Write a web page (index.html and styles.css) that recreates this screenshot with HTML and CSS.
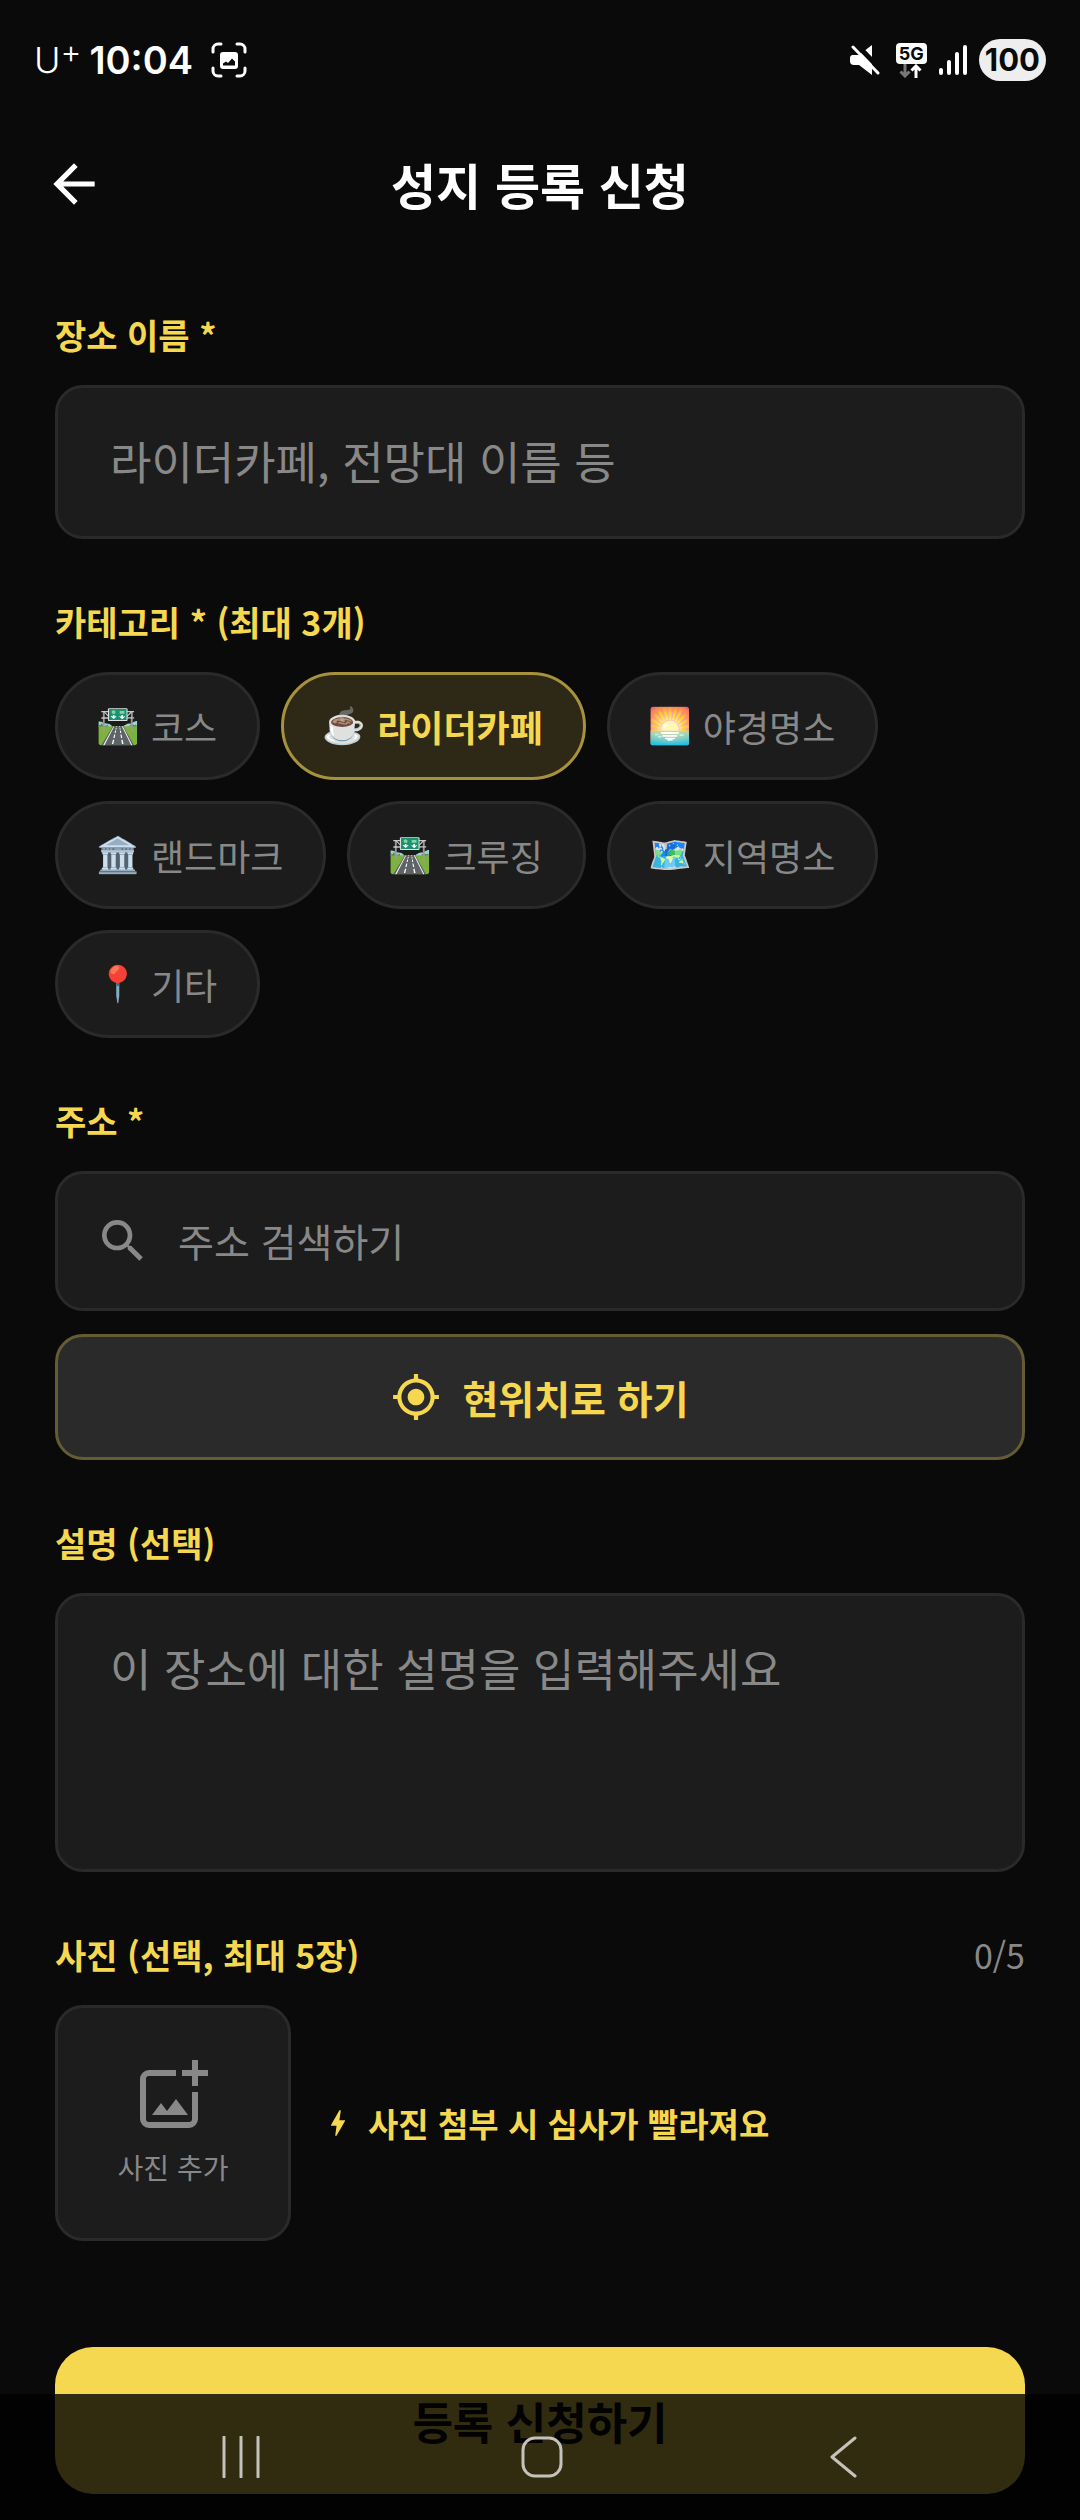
FILE: index.html
```html
<!DOCTYPE html>
<html lang="ko">
<head>
  <meta charset="UTF-8" />
  <meta name="viewport" content="width=device-width, initial-scale=1.0" />
  <title>성지 등록 신청</title>
  <link rel="stylesheet" href="styles.css">
</head>

<body>
  <div class="status-bar">
    <div class="status-left">
      <span class="carrier">U<sup>+</sup></span>
      <span class="clock">10:04</span>
      <svg class="capture-icon" width="36" height="36" viewBox="0 0 36 36">
        <path d="M2 10V7a5 5 0 0 1 5-5h3M26 2h3a5 5 0 0 1 5 5v3M34 26v3a5 5 0 0 1-5 5h-3M10 34H7a5 5 0 0 1-5-5v-3" fill="none" stroke="#fff" stroke-width="3" stroke-linecap="round"/>
        <rect x="9" y="10" width="18" height="17" rx="3" fill="#fff"/>
        <path d="M12 23.500v-2l3-2 2 1.500 4-4.500 3 3v4z" fill="#0a0a0a"/>
      </svg>
    </div>
    <div class="status-right">
      <svg width="30" height="32" viewBox="0 0 30 32">
        <path d="M2 11h7L22 1v30L9 21H4a4 4 0 0 1-4-4v-3a3 3 0 0 1 2-3z" fill="#fff"/>
        <path d="M6 0l26 27" stroke="#0a0a0a" stroke-width="5"/>
        <path d="M3 3l25 26" stroke="#fff" stroke-width="3" stroke-linecap="round"/>
      </svg>
      <div class="network">
        <span class="network-type">5G</span>
        <svg width="24" height="14" viewBox="0 0 24 14">
          <path d="M6 0v12M1.500 7.500L6 12l4.500-4.500" fill="none" stroke="#777" stroke-width="3"/>
          <path d="M17 14V2M12.500 6.500L17 2l4.500 4.500" fill="none" stroke="#fff" stroke-width="3"/>
        </svg>
      </div>
      <svg width="28" height="30" viewBox="0 0 28 30">
        <path d="M2 25v3M10 17v11M18 9v19M26 2v26" stroke="#fff" stroke-width="4" stroke-linecap="round"/>
      </svg>
      <span class="battery">100</span>
    </div>
  </div>

  <header class="header">
    <button type="button" class="back-btn" aria-label="뒤로">
      <svg width="62" height="62" viewBox="0 0 24 24" fill="#fff">
        <path d="M20 11H7.830l5.590-5.590L12 4l-8 8 8 8 1.410-1.410L7.830 13H20v-2z"/>
      </svg>
    </button>
    <h1>성지 등록 신청</h1>
  </header>

  <form class="form">
    <section class="field">
      <label class="field-label" for="place-name">장소 이름 *</label>
      <input class="box text-input" id="place-name" type="text" placeholder="라이더카페, 전망대 이름 등">
    </section>

    <fieldset class="field">
      <legend class="field-label">카테고리 * (최대 3개)</legend>
      <div class="chips">
        <label class="chip"><input type="checkbox" name="category"><span class="emoji">🛣️</span>코스</label>
        <label class="chip"><input type="checkbox" name="category" checked><span class="emoji">☕</span>라이더카페</label>
        <label class="chip"><input type="checkbox" name="category"><span class="emoji">🌅</span>야경명소</label>
        <label class="chip"><input type="checkbox" name="category"><span class="emoji">🏛️</span>랜드마크</label>
        <label class="chip"><input type="checkbox" name="category"><span class="emoji">🛣️</span>크루징</label>
        <label class="chip"><input type="checkbox" name="category"><span class="emoji">🗺️</span>지역명소</label>
        <label class="chip"><input type="checkbox" name="category"><span class="emoji">📍</span>기타</label>
      </div>
    </fieldset>

    <section class="field">
      <label class="field-label" for="address">주소 *</label>
      <div class="box search-box">
        <svg width="56" height="56" viewBox="0 0 24 24" fill="#888">
          <path d="M15.500 14h-.79l-.28-.27A6.470 6.470 0 0 0 16 9.500 6.500 6.500 0 1 0 9.500 16c1.610 0 3.090-.59 4.230-1.570l.27.28v.79l5 4.990L20.490 19l-4.990-5zm-6 0C7.010 14 5 11.990 5 9.500S7.010 5 9.500 5 14 7.010 14 9.500 11.990 14 9.500 14z"/>
        </svg>
        <input id="address" type="text" placeholder="주소 검색하기">
      </div>
      <button type="button" class="box location-btn">
        <svg width="50" height="50" viewBox="0 0 24 24" fill="#f5d84f">
          <path d="M12 8c-2.210 0-4 1.790-4 4s1.790 4 4 4 4-1.790 4-4-1.790-4-4-4zm8.940 3c-.46-4.170-3.770-7.480-7.940-7.940V1h-2v2.060C6.830 3.520 3.520 6.830 3.060 11H1v2h2.060c.46 4.170 3.770 7.480 7.940 7.940V23h2v-2.060c4.170-.46 7.480-3.770 7.940-7.940H23v-2h-2.060zM12 19c-3.870 0-7-3.130-7-7s3.130-7 7-7 7 3.130 7 7-3.130 7-7 7z"/>
        </svg>
        현위치로 하기
      </button>
    </section>

    <section class="field">
      <label class="field-label" for="description">설명 (선택)</label>
      <textarea class="box text-input" id="description" rows="3" placeholder="이 장소에 대한 설명을 입력해주세요"></textarea>
    </section>

    <section class="field">
      <div class="photo-head">
        <h2 class="field-label">사진 (선택, 최대 5장)</h2>
        <span class="photo-count">0/5</span>
      </div>
      <div class="photo-row">
        <button type="button" class="box photo-btn">
          <svg width="70" height="68" viewBox="-2 0 70 68">
            <path d="M36 13H9a6 6 0 0 0-6 6v40a6 6 0 0 0 6 6h40a6 6 0 0 0 6-6V32" fill="none" stroke="#888" stroke-width="6"/>
            <path d="M55 0v26M42 13h26" stroke="#888" stroke-width="6"/>
            <path d="M12 55l9-12 6 8 9-12 12 16z" fill="#888"/>
          </svg>
          사진 추가
        </button>
        <p class="photo-tip">
          <svg width="34" height="34" viewBox="0 0 24 24" fill="#f5d84f">
            <path d="M11 21h-1l1-7H7.500c-.88 0-.33-.75-.31-.78C8.480 10.940 10.420 7.540 13.010 3h1l-1 7h3.510c.4 0 .62.19.4.66C12.970 17.550 11 21 11 21z"/>
          </svg>
          사진 첨부 시 심사가 빨라져요
        </p>
      </div>
    </section>

    <button type="submit" class="submit-btn">등록 신청하기</button>
  </form>

  <nav class="nav-bar">
    <button type="button" aria-label="최근 앱">
      <svg width="42" height="42" viewBox="0 0 42 42">
        <path d="M4 1v40M21 1v40M38 1v40"/>
      </svg>
    </button>
    <button type="button" aria-label="홈">
      <svg width="42" height="42" viewBox="0 0 42 42">
        <rect x="2" y="2" width="38" height="38" rx="12"/>
      </svg>
    </button>
    <button type="button" aria-label="뒤로">
      <svg width="42" height="42" viewBox="0 0 42 42">
        <path d="M33 2L10 21l23 19"/>
      </svg>
    </button>
  </nav>
</body>
</html>
```

FILE: styles.css
```css
* {
  box-sizing: border-box;
}
body {
  margin: 0;
  background: #0a0a0a;
  color: #fff;
  font-family: "Noto Sans CJK KR", sans-serif;
}
svg {
  display: block;
  flex: none;
}
button,
input,
textarea {
  font-family: inherit;
  color: inherit;
}
button {
  cursor: pointer;
}

/* status bar */
.status-bar {
  display: flex;
  justify-content: space-between;
  align-items: center;
  height: 120px;
  padding: 0 34px;
  font-family: Inter, sans-serif;
}
.status-left,
.status-right {
  display: flex;
  align-items: center;
}
.status-right {
  gap: 12px;
}
.carrier {
  display: flex;
  font-size: 36px;
  font-weight: 300;
}
.carrier sup {
  font-size: 32px;
  line-height: 28px;
}
.clock {
  margin: 0 18px 0 8px;
  font-size: 38px;
  font-weight: 600;
}
.network {
  display: flex;
  flex-direction: column;
  align-items: center;
  margin-left: 4px;
}
.network-type {
  padding: 0 3px;
  border-radius: 4px;
  background: #fff;
  color: #0a0a0a;
  font-size: 18px;
  font-weight: 700;
  line-height: 21px;
}
.battery {
  padding: 0 6px;
  border-radius: 21px;
  background: #eee;
  color: #0a0a0a;
  font-size: 31px;
  font-weight: 700;
  line-height: 42px;
}

/* title */
.header {
  display: grid;
  grid-template-columns: 62px 1fr 62px;
  align-items: center;
  height: 128px;
  padding: 0 43px;
}
.header h1 {
  margin: 0;
  font-size: 49px;
  line-height: 72px;
  text-align: center;
}
.back-btn {
  padding: 0;
  border: none;
  background: none;
}

/* form */
.form {
  display: flex;
  flex-direction: column;
  gap: 60px;
  padding: 64px 55px 25px;
}
.field {
  min-width: 0;
  margin: 0;
  padding: 0;
  border: none;
}
.field-label {
  display: block;
  margin: 0 0 27px;
  padding: 0;
  color: #f5d84f;
  font-size: 34px;
  font-weight: 600;
  line-height: 46px;
}
.box {
  width: 100%;
  border: 3px solid #2a2a2a;
  border-radius: 28px;
  background: #1c1c1c;
}
::placeholder {
  color: #888;
  opacity: 1;
}
.text-input {
  display: block;
  padding: 41px 52px 45px;
  font-size: 45px;
  line-height: 62px;
  outline: none;
  resize: none;
}
input.text-input {
  height: 154px;
}
textarea.text-input {
  height: 279px;
}

.chips {
  display: flex;
  flex-wrap: wrap;
  gap: 21px;
}
.chip {
  display: flex;
  align-items: center;
  gap: 13px;
  height: 108px;
  padding: 0 40px;
  border: 3px solid #2a2a2a;
  border-radius: 54px;
  background: #1c1c1c;
  color: #888;
  font-size: 36px;
  cursor: pointer;
}
.chip input {
  position: absolute;
  opacity: 0;
}
.chip:has(:checked) {
  border-color: #a6913c;
  background: #2e2817;
  color: #f5d84f;
  font-weight: 700;
}
.emoji {
  display: flex;
  justify-content: center;
  width: 40px;
  font-family: "Noto Color Emoji", sans-serif;
  font-size: 35px;
}

.search-box {
  display: flex;
  align-items: center;
  gap: 27px;
  height: 140px;
  padding: 0 37px;
}
.search-box input {
  flex: 1;
  padding: 0 0 2px;
  border: none;
  background: none;
  font-size: 39px;
  outline: none;
}
.location-btn {
  display: flex;
  justify-content: center;
  align-items: center;
  gap: 21px;
  height: 126px;
  margin-top: 23px;
  border-color: #665c33;
  background: #2a2a2a;
  color: #f5d84f;
  font-size: 39px;
  font-weight: 700;
}

.photo-head {
  display: flex;
  justify-content: space-between;
}
.photo-count {
  color: #888;
  font-size: 34px;
  line-height: 46px;
}
.photo-row {
  display: flex;
  align-items: center;
  gap: 30px;
}
.photo-btn {
  display: flex;
  flex-direction: column;
  justify-content: center;
  align-items: center;
  gap: 19px;
  width: 236px;
  height: 236px;
  color: #888;
  font-size: 28px;
  line-height: 40px;
}
.photo-tip {
  display: flex;
  align-items: center;
  gap: 13px;
  margin: 0;
  color: #f5d84f;
  font-size: 33px;
  font-weight: 600;
  line-height: 46px;
}
.submit-btn {
  height: 147px;
  margin-top: 46px;
  border: none;
  border-radius: 38px;
  background: #f5d84f;
  color: #0a0a0a;
  font-size: 44px;
  font-weight: 700;
}

/* system navigation lies over the end of the form */
.nav-bar {
  position: fixed;
  left: 0;
  right: 0;
  bottom: 0;
  display: grid;
  grid-template-columns: repeat(3, 28%);
  justify-content: center;
  height: 126px;
  padding-left: 4px;
  background: rgba(0, 0, 0, 0.8);
}
.nav-bar button {
  display: flex;
  justify-content: center;
  align-items: center;
  padding: 0;
  border: none;
  background: none;
}
.nav-bar svg {
  fill: none;
  stroke: #c4c2bb;
  stroke-width: 3;
  stroke-linecap: round;
  stroke-linejoin: round;
}
```
